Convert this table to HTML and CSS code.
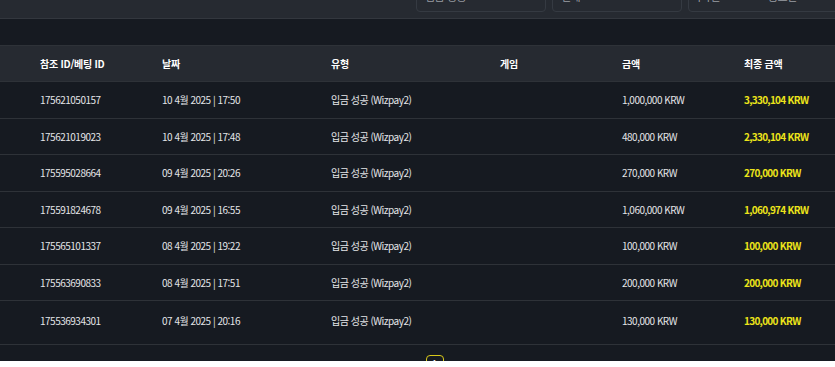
FILE: index.html
```html
<!DOCTYPE html>
<html lang="ko">
<head>
<meta charset="utf-8">
<link rel="stylesheet" href="styles.css">
</head>
<body>
<div class="page">
  <div class="topbar">
    <div class="topbar-inner">
      <span class="top-title">입금</span>
      <div class="filters">
        <div class="filter"><span>입금 성공</span></div>
        <div class="filter"><span>전체</span></div>
        <div class="filter wide"><span>시작일</span><span class="right">종료일</span></div>
      </div>
    </div>
  </div>
  <div class="gap"></div>
  <div class="table">
    <div class="row head">
      <div>참조 ID/베팅 ID</div><div>날짜</div><div>유형</div><div>게임</div><div>금액</div><div>최종 금액</div>
    </div>
    <div class="row">
      <div>175621050157</div><div>10 4월 2025 | 17:50</div><div>입금 성공 (Wizpay2)</div><div></div><div>1,000,000 KRW</div><div class="final">3,330,104 KRW</div>
    </div>
    <div class="row">
      <div>175621019023</div><div>10 4월 2025 | 17:48</div><div>입금 성공 (Wizpay2)</div><div></div><div>480,000 KRW</div><div class="final">2,330,104 KRW</div>
    </div>
    <div class="row">
      <div>175595028664</div><div>09 4월 2025 | 20:26</div><div>입금 성공 (Wizpay2)</div><div></div><div>270,000 KRW</div><div class="final">270,000 KRW</div>
    </div>
    <div class="row">
      <div>175591824678</div><div>09 4월 2025 | 16:55</div><div>입금 성공 (Wizpay2)</div><div></div><div>1,060,000 KRW</div><div class="final">1,060,974 KRW</div>
    </div>
    <div class="row">
      <div>175565101337</div><div>08 4월 2025 | 19:22</div><div>입금 성공 (Wizpay2)</div><div></div><div>100,000 KRW</div><div class="final">100,000 KRW</div>
    </div>
    <div class="row">
      <div>175563690833</div><div>08 4월 2025 | 17:51</div><div>입금 성공 (Wizpay2)</div><div></div><div>200,000 KRW</div><div class="final">200,000 KRW</div>
    </div>
    <div class="row last">
      <div>175536934301</div><div>07 4월 2025 | 20:16</div><div>입금 성공 (Wizpay2)</div><div></div><div>130,000 KRW</div><div class="final">130,000 KRW</div>
    </div>
  </div>
  <div class="pager">
    <button class="page-btn">1</button>
  </div>
</div>
</body>
</html>
```
FILE: styles.css
```css
html, body {
  margin: 0;
  padding: 0;
  background: #ffffff;
}
body {
  font-family: "Noto Sans CJK KR", "Noto Sans", sans-serif;
  font-size: 10px;
  letter-spacing: -0.5px;
  color: #e4e5e8;
}
.page {
  width: 835px;
  background: #161a21;
  height: 361px;
  overflow: hidden;
}
.topbar {
  height: 18px;
  background: #262a31;
  border-bottom: 1px solid #33373e;
  overflow: hidden;
}
.topbar-inner {
  display: flex;
  align-items: flex-end;
  height: 40px;
  margin-top: -28px;
}
.top-title {
  font-size: 13px;
  color: #ffffff;
  margin-left: -4px;
  line-height: 33px;
  align-self: flex-start;
}
.filters {
  display: flex;
  gap: 6px;
  margin-left: auto;
  margin-right: -20px;
}
.filter {
  width: 130px;
  height: 38px;
  border: 1px solid #353a42;
  border-radius: 4px;
  display: flex;
  justify-content: space-between;
  padding: 0 8px;
  box-sizing: border-box;
  color: #9a9da3;
  line-height: 43px;
  font-size: 11px;
}
.filter.wide {
  width: 167px;
  padding-left: 2px;
  justify-content: flex-start;
}
.filter .right {
  margin-left: 48px;
}
.gap {
  height: 26px;
}
.table {
  border-top: 1px solid #2e3238;
}
.row {
  display: grid;
  grid-template-columns: 122px 169px 169px 122px 122px 1fr;
  padding-left: 40px;
  height: 35.5px;
  align-items: center;
  border-bottom: 1px solid #2e3238;
}
.row.head {
  background: #262a31;
  color: #ffffff;
  font-weight: 700;
  letter-spacing: -0.25px;
  height: 35px;
}
.row.last {
  height: 39px;
  padding-bottom: 4px;
}
.final {
  color: #ece41a;
  font-weight: 700;
  letter-spacing: -0.7px;
}
.pager {
  display: flex;
  justify-content: center;
  padding-top: 10px;
}
.page-btn {
  width: 18px;
  height: 18px;
  margin-left: 34px;
  border: 1px solid #d8c81a;
  border-radius: 4px;
  background: transparent;
  color: #ffffff;
  font-size: 10px;
  padding: 0;
}
```
